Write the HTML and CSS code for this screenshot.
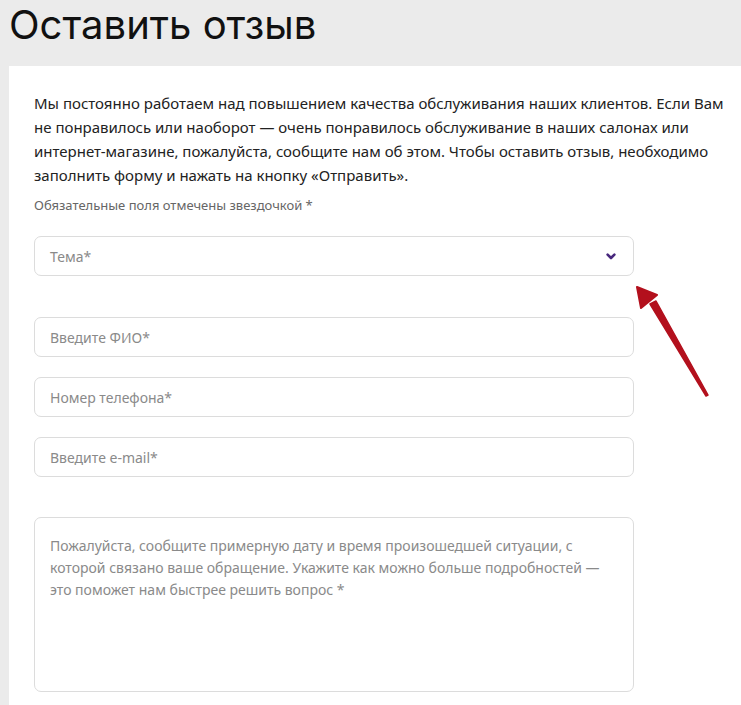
FILE: index.html
```html
<!DOCTYPE html>
<html lang="ru">
<head>
<meta charset="utf-8">
<title>Оставить отзыв</title>
<link rel="stylesheet" href="styles.css">
</head>
<body>
<header class="page-head">
  <h1 class="page-title">Оставить отзыв</h1>
</header>
<main class="panel">
  <p class="intro">Мы постоянно работаем над повышением качества обслуживания наших клиентов. Если Вам не понравилось или наоборот — очень понравилось обслуживание в наших салонах или интернет-магазине, пожалуйста, сообщите нам об этом. Чтобы оставить отзыв, необходимо заполнить форму и нажать на кнопку «Отправить».</p>
  <p class="note">Обязательные поля отмечены звездочкой *</p>
  <form class="form">
    <div class="field select-field">
      <span class="placeholder">Тема*</span>
      <svg class="chevron" width="10" height="7" viewBox="0 0 10 7"><path d="M1.6 1.6 L5 5 L8.4 1.6" fill="none" stroke="#48287d" stroke-width="2.6" stroke-linecap="round" stroke-linejoin="round"/></svg>
    </div>
    <div class="field gap-big"><span class="placeholder">Введите ФИО*</span></div>
    <div class="field"><span class="placeholder">Номер телефона*</span></div>
    <div class="field"><span class="placeholder">Введите e-mail*</span></div>
    <div class="field textarea gap-area"><span class="placeholder">Пожалуйста, сообщите примерную дату и время произошедшей ситуации, с которой связано ваше обращение. Укажите как можно больше подробностей — это поможет нам быстрее решить вопрос *</span></div>
  </form>
  <svg class="arrow" width="90" height="130" viewBox="0 0 90 130">
    <path d="M14 18 L20 15 L72 109 L70 110 Z" fill="#b3101d" stroke="#b3101d" stroke-width="1.5" stroke-linejoin="round"/>
    <path d="M1 1 L21 9 L5 22 Z" fill="#b3101d" stroke="#b3101d" stroke-width="2" stroke-linejoin="round"/>
  </svg>
</main>
</body>
</html>
```
FILE: styles.css
```css
html, body {
  margin: 0;
  padding: 0;
}
body {
  background: #ebebeb;
  font-family: "Noto Sans", "Open Sans", sans-serif;
  color: #222;
  height: 705px;
  overflow: hidden;
}
.page-head {
  height: 66px;
  padding-left: 9px;
}
.page-title {
  margin: 0;
  font-family: Inter, "Noto Sans", sans-serif;
  font-weight: 400;
  font-size: 40px;
  line-height: 50px;
  color: #111;
  letter-spacing: 0;
}
.panel {
  position: relative;
  margin-left: 9px;
  background: #fff;
  height: 639px;
  padding: 25px 0 0 25px;
  box-sizing: border-box;
}
.intro {
  margin: 0;
  font-size: 15px;
  line-height: 24px;
  color: #222;
  width: 700px;
}
.note {
  margin: 10px 0 0;
  font-size: 13px;
  line-height: 16px;
  color: #666;
}
.form {
  margin-top: 23px;
  display: flex;
  flex-direction: column;
  gap: 20px;
  width: 600px;
}
.field {
  box-sizing: border-box;
  height: 40px;
  border: 1px solid #dcdcdc;
  border-radius: 7px;
  padding: 0 15px;
  display: flex;
  align-items: center;
  justify-content: space-between;
}
.gap-big {
  margin-top: 21px;
}
.gap-area {
  margin-top: 20px;
}
.placeholder {
  font-size: 14px;
  color: #8a8a8a;
}
.textarea {
  height: 175px;
  align-items: flex-start;
  padding-top: 17px;
}
.textarea .placeholder {
  line-height: 22px;
}
.chevron {
  margin-right: 2px;
}
.arrow {
  position: absolute;
  left: 627px;
  top: 220px;
}
```
